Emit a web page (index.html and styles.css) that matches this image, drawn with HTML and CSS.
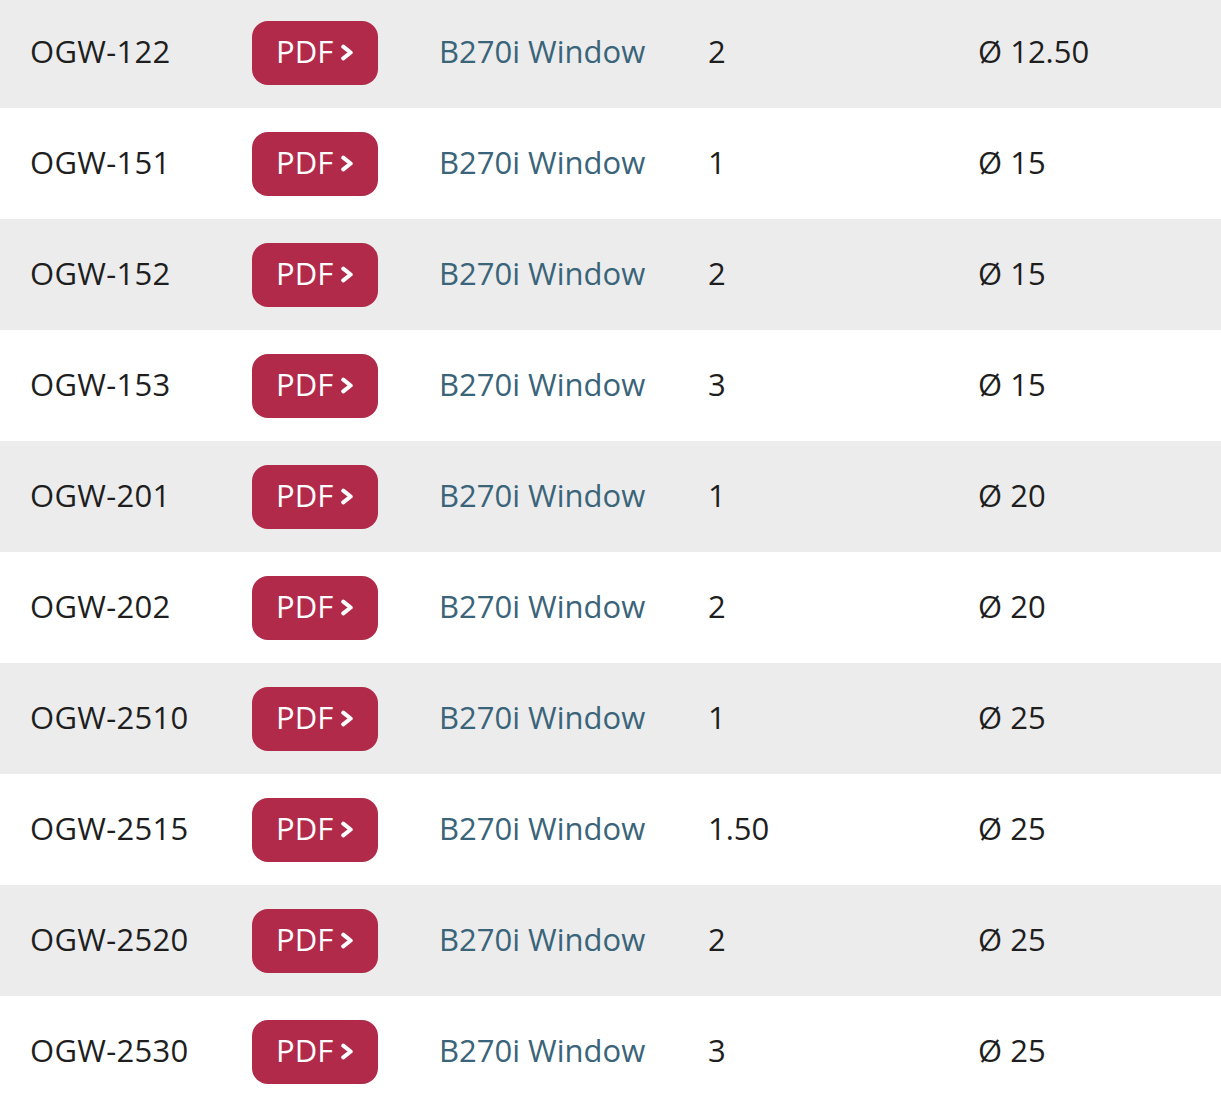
FILE: index.html
```html
<!DOCTYPE html>
<html>
<head>
<meta charset="utf-8">
<link rel="stylesheet" href="styles.css">
</head>
<body>
<div class="table">
  <div class="row alt"><div class="c code">OGW-122</div><div class="b"><a class="pdf">PDF<svg viewBox="0 0 14 16" class="chev"><polyline points="3,2.5 10,8 3,13.5"/></svg></a></div><div class="c mat">B270i Window</div><div class="c">2</div><div class="c">Ø 12.50</div></div>
  <div class="row"><div class="c code">OGW-151</div><div class="b"><a class="pdf">PDF<svg viewBox="0 0 14 16" class="chev"><polyline points="3,2.5 10,8 3,13.5"/></svg></a></div><div class="c mat">B270i Window</div><div class="c">1</div><div class="c">Ø 15</div></div>
  <div class="row alt"><div class="c code">OGW-152</div><div class="b"><a class="pdf">PDF<svg viewBox="0 0 14 16" class="chev"><polyline points="3,2.5 10,8 3,13.5"/></svg></a></div><div class="c mat">B270i Window</div><div class="c">2</div><div class="c">Ø 15</div></div>
  <div class="row"><div class="c code">OGW-153</div><div class="b"><a class="pdf">PDF<svg viewBox="0 0 14 16" class="chev"><polyline points="3,2.5 10,8 3,13.5"/></svg></a></div><div class="c mat">B270i Window</div><div class="c">3</div><div class="c">Ø 15</div></div>
  <div class="row alt"><div class="c code">OGW-201</div><div class="b"><a class="pdf">PDF<svg viewBox="0 0 14 16" class="chev"><polyline points="3,2.5 10,8 3,13.5"/></svg></a></div><div class="c mat">B270i Window</div><div class="c">1</div><div class="c">Ø 20</div></div>
  <div class="row"><div class="c code">OGW-202</div><div class="b"><a class="pdf">PDF<svg viewBox="0 0 14 16" class="chev"><polyline points="3,2.5 10,8 3,13.5"/></svg></a></div><div class="c mat">B270i Window</div><div class="c">2</div><div class="c">Ø 20</div></div>
  <div class="row alt"><div class="c code">OGW-2510</div><div class="b"><a class="pdf">PDF<svg viewBox="0 0 14 16" class="chev"><polyline points="3,2.5 10,8 3,13.5"/></svg></a></div><div class="c mat">B270i Window</div><div class="c">1</div><div class="c">Ø 25</div></div>
  <div class="row"><div class="c code">OGW-2515</div><div class="b"><a class="pdf">PDF<svg viewBox="0 0 14 16" class="chev"><polyline points="3,2.5 10,8 3,13.5"/></svg></a></div><div class="c mat">B270i Window</div><div class="c">1.50</div><div class="c">Ø 25</div></div>
  <div class="row alt"><div class="c code">OGW-2520</div><div class="b"><a class="pdf">PDF<svg viewBox="0 0 14 16" class="chev"><polyline points="3,2.5 10,8 3,13.5"/></svg></a></div><div class="c mat">B270i Window</div><div class="c">2</div><div class="c">Ø 25</div></div>
  <div class="row"><div class="c code">OGW-2530</div><div class="b"><a class="pdf">PDF<svg viewBox="0 0 14 16" class="chev"><polyline points="3,2.5 10,8 3,13.5"/></svg></a></div><div class="c mat">B270i Window</div><div class="c">3</div><div class="c">Ø 25</div></div>
</div>
</body>
</html>
```
FILE: styles.css
```css
html, body {
  margin: 0;
  padding: 0;
  background: #fff;
  overflow: hidden;
}
body {
  font-family: "Open Sans", "Noto Sans", sans-serif;
  font-size: 31px;
  color: #1e1e1e;
}
.table {
  margin-top: -3px;
}
.row {
  display: grid;
  grid-template-columns: 221px 188px 269px 270px 1fr;
  height: 111px;
  align-items: center;
  padding-left: 30px;
  background: #fff;
}
.row.alt {
  background: #ececec;
}
.c {
  white-space: nowrap;
  padding-bottom: 4px;
}
.code {
  letter-spacing: 0.3px;
}
.b {
  padding-left: 1px;
}
.mat {
  color: #3a6479;
}
.pdf {
  display: inline-flex;
  align-items: center;
  box-sizing: border-box;
  width: 126px;
  height: 64px;
  padding-left: 24px;
  padding-bottom: 3px;
  border-radius: 16px;
  background: #b12a4a;
  color: #fff;
  text-decoration: none;
}
.chev {
  width: 15px;
  height: 17px;
  margin-left: 7px;
  margin-top: 3px;
  fill: none;
  stroke: #fff;
  stroke-width: 3.8;
  stroke-linecap: round;
  stroke-linejoin: round;
}
```
